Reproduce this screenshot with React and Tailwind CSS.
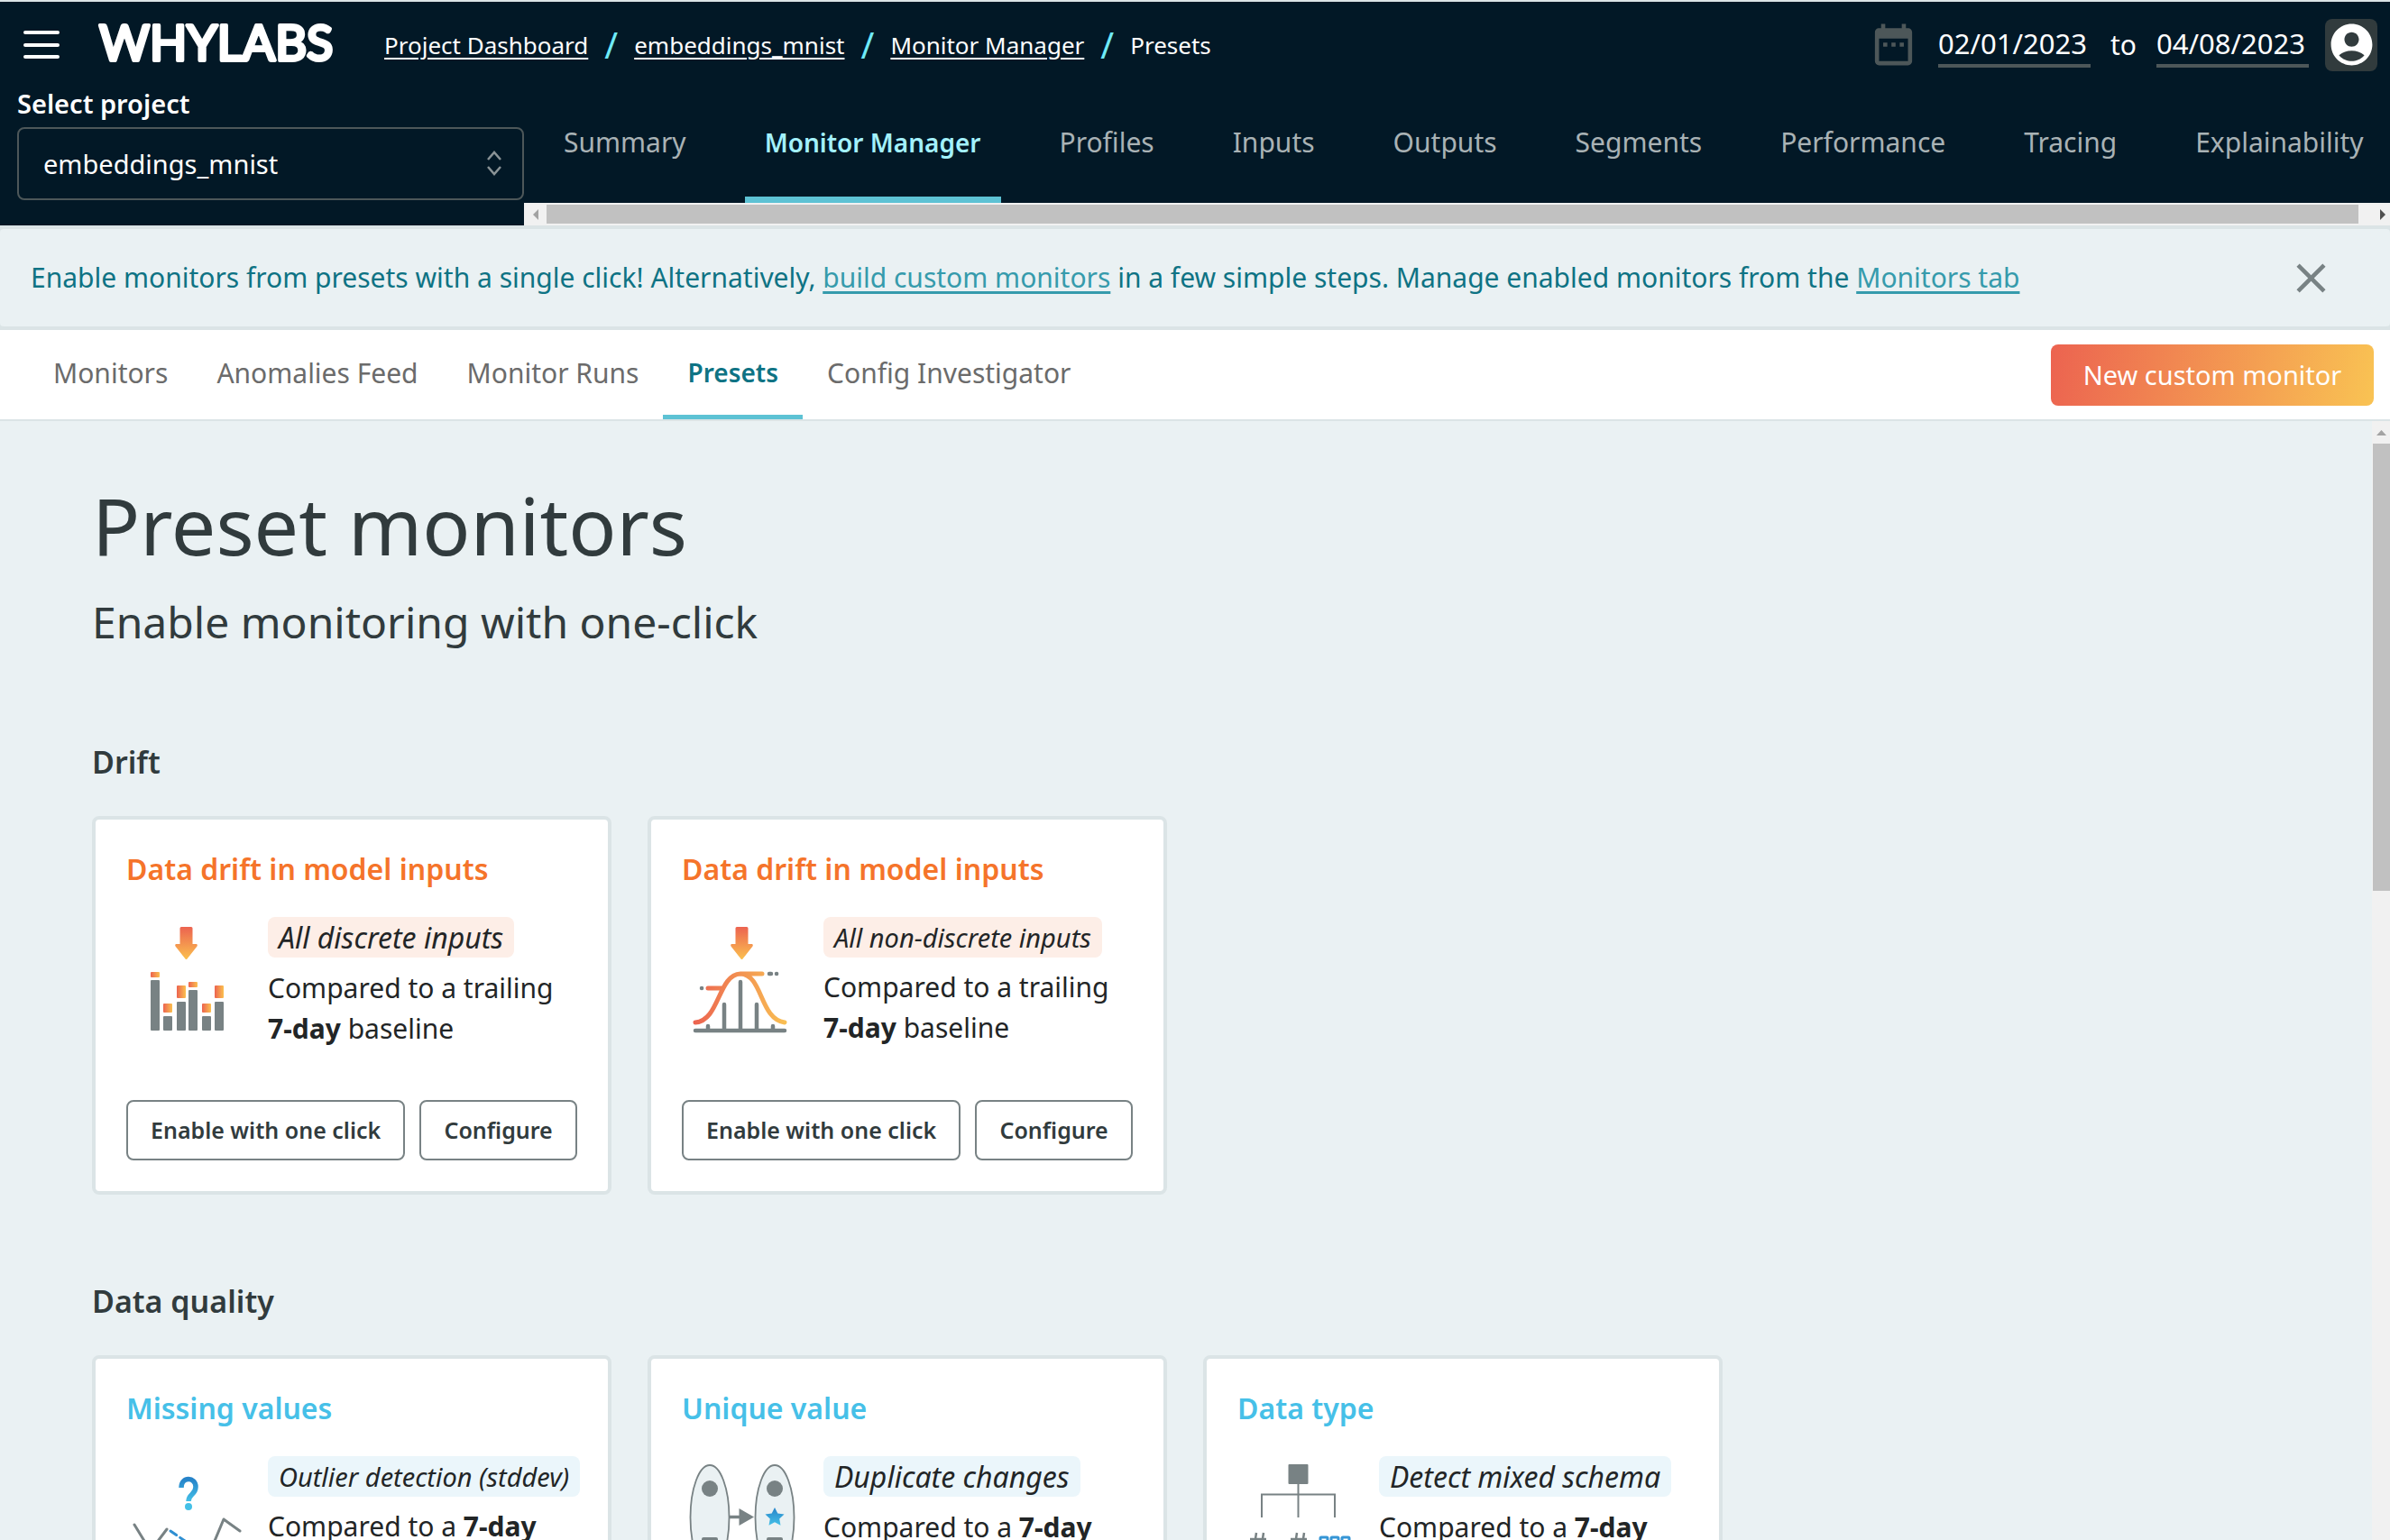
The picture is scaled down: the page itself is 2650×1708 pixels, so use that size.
import React from "react";
import { MdAccountCircle, MdClose, MdDateRange } from "react-icons/md";

const GRAY = "#788284";

function Hamburger() {
  return (
    <svg width="42" height="34" viewBox="0 0 42 34" fill="none" stroke="#fff" strokeWidth="4" strokeLinecap="round">
      <path d="M3 3H39M3 17H39M3 30H39" />
    </svg>
  );
}

function Logo() {
  return (
    <svg width="276" height="60" viewBox="0 0 276 60">
      <text
        x="2"
        y="47"
        fontFamily="Lato, sans-serif"
        fontSize="54"
        fill="#fff"
        stroke="#fff"
        strokeWidth="4"
        strokeLinejoin="round"
      >
        WHYLABS
      </text>
    </svg>
  );
}

function Arrow() {
  return (
    <>
      <defs>
        <linearGradient id="arrowFill" x1="0" y1="0" x2="0" y2="1">
          <stop offset="0" stopColor="#ec6350" />
          <stop offset="1" stopColor="#fbc04f" />
        </linearGradient>
      </defs>
      <path
        d="M61 11H72Q73.500 11 73.500 12.500V30H78Q79.500 30.500 78.500 32.500L67.500 46.500Q66.500 47.500 65.500 46.500L54.500 32.500Q53.500 30.500 55 30H59.500V12.500Q59.500 11 61 11Z"
        fill="url(#arrowFill)"
      />
    </>
  );
}

const BARS = [
  [27, 61, 6, 70],
  [41, 96, 10, 110],
  [56, 76, 14, 94],
  [69, 72, 6, 81],
  [84, 96, 10, 110],
  [98, 76, 14, 94],
];

function DiscreteIcon() {
  return (
    <svg width="157" height="140" viewBox="0 0 157 140" className="shrink-0">
      <Arrow />
      <defs>
        <linearGradient id="barCap">
          <stop offset="0" stopColor="#ec6350" />
          <stop offset="1" stopColor="#fbc04f" />
        </linearGradient>
      </defs>
      {BARS.map(([x, top, h, gray]) => (
        <g key={x}>
          <rect x={x} y={top} width="10" height={h} rx="1" fill="url(#barCap)" />
          <rect x={x} y={gray} width="10" height={126 - gray} rx="1" fill={GRAY} />
        </g>
      ))}
    </svg>
  );
}

function DistributionIcon() {
  return (
    <svg width="157" height="140" viewBox="0 0 157 140" className="shrink-0" fill="none" strokeLinecap="round">
      <Arrow />
      <defs>
        <linearGradient id="curve" gradientUnits="userSpaceOnUse" x1="13" y1="0" x2="116" y2="0">
          <stop offset="0" stopColor="#ec6350" />
          <stop offset="1" stopColor="#f9c053" />
        </linearGradient>
      </defs>
      <path d="M15 126H114M29 121V125M47 97V125M65 72V125M83 97V125M101 121V125" stroke={GRAY} strokeWidth="4.500" />
      <path
        d="M15 117C42 115 40 64 65 63C90 64 86 113 114 117M65 63H89M29 79H45"
        stroke="url(#curve)"
        strokeWidth="5"
      />
      <path d="M97 63H99M105 63H105.100M22 79H22.100" stroke={GRAY} strokeWidth="4.500" />
    </svg>
  );
}

function BlueGradient({ id }) {
  return (
    <defs>
      <linearGradient id={id} x1="0" y1="0" x2="0" y2="1">
        <stop offset="0" stopColor="#2683c9" />
        <stop offset="1" stopColor="#44c0e7" />
      </linearGradient>
    </defs>
  );
}

function MissingIcon() {
  return (
    <svg width="157" height="140" viewBox="0 0 157 140" className="shrink-0" fill="none" strokeLinecap="round" strokeLinejoin="round">
      <BlueGradient id="question" />
      <path d="M61 35C61 22 77 23 77 34C77 43 69 42 69 50" stroke="url(#question)" strokeWidth="5.500" strokeLinecap="butt" />
      <circle cx="69" cy="56" r="4" fill="#44c0e7" />
      <g stroke={GRAY} strokeWidth="3">
        <path d="M9 76L20 94L26 106L36 93L45 81" />
        <path d="M92 112L98 94L108 70L126 83" />
      </g>
      <path d="M49 83L65 94L80 112" stroke="#2f8fd2" strokeWidth="3" strokeDasharray="8 5" />
    </svg>
  );
}

function UniqueIcon() {
  return (
    <svg width="157" height="140" viewBox="0 0 157 140" className="shrink-0">
      <BlueGradient id="star" />
      {[31, 103].map((cx) => (
        <g key={cx}>
          <ellipse cx={cx} cy="68" rx="21.500" ry="58" fill="#eaf1f3" stroke={GRAY} strokeWidth="1.800" />
          <circle cx={cx} cy="36" r="9" fill={GRAY} />
          <rect x={cx - 9} y="90" width="18" height="18" rx="2" fill={GRAY} />
        </g>
      ))}
      <path d="M53 67.500H65" stroke={GRAY} strokeWidth="3.500" />
      <path d="M63.500 58V77L80 67.500Z" fill={GRAY} />
      <path
        d="M103 57L106.300 63.500L113.500 64.500L108.200 69.500L109.500 76.700L103 73.300L96.500 76.700L97.800 69.500L92.500 64.500L99.700 63.500Z"
        fill="url(#star)"
      />
    </svg>
  );
}

function SchemaIcon() {
  return (
    <svg width="157" height="140" viewBox="0 0 157 140" className="shrink-0" fill="none">
      <rect x="56.500" y="9" width="22" height="22" rx="1" fill={GRAY} />
      <path d="M67.500 31V68M27 68V42.500H108V68" stroke={GRAY} strokeWidth="2" />
      {[14, 59].map((x) => (
        <path
          key={x}
          d={`M${x} 92H${x + 18}M${x - 1} 99H${x + 17}M${x + 7} 85L${x + 4} 105M${x + 15} 85L${x + 12} 105`}
          stroke={GRAY}
          strokeWidth="2.500"
        />
      ))}
      {[92, 104, 116].map((x) => (
        <rect key={x} x={x} y="90" width="8" height="14" rx="1" stroke="#3696d6" strokeWidth="3" />
      ))}
    </svg>
  );
}

const OUTLINE_BUTTON =
  "h-[67px] whitespace-nowrap rounded-lg border-2 border-[#788284] text-[25px] font-semibold text-[#313b3d]";

function PresetCard({ title, tone, chip, dense, icon, firstLine, children }) {
  return (
    <article className="flex min-h-[420px] w-[576px] flex-col rounded-lg border-4 border-[#dbe4e6] bg-white p-[34px]">
      <h3
        className={
          tone === "orange"
            ? "mb-8 text-[32px] font-semibold leading-[42px] text-[#f5742a]"
            : "mb-8 text-[32px] font-semibold leading-[42px] text-[#46c0e8]"
        }
      >
        {title}
      </h3>
      <div className="flex">
        {icon}
        <div className="whitespace-nowrap text-[30px] leading-[45px] text-[#222526]">
          <span
            className={`inline-block rounded-lg px-3 italic ${tone === "orange" ? "bg-[#fdeee7]" : "bg-[#ebf6fb]"} ${
              dense ? "text-[29px]" : "text-[32px]"
            }`}
          >
            {chip}
          </span>
          <p className="mt-[10px]">
            {firstLine}
            <br />
            {children}
          </p>
        </div>
      </div>
      <div className="mt-auto flex gap-4">
        <button type="button" className={`${OUTLINE_BUTTON} grow-[311] basis-0`}>Enable with one click</button>
        <button type="button" className={`${OUTLINE_BUTTON} grow-[174] basis-0`}>Configure</button>
      </div>
    </article>
  );
}

const NAV = ["Summary", "Monitor Manager", "Profiles", "Inputs", "Outputs", "Segments", "Performance", "Tracing", "Explainability"];
const TABS = ["Monitors", "Anomalies Feed", "Monitor Runs", "Presets", "Config Investigator"];
const DATE_INPUT =
  "w-[169px] border-b-4 border-[#4d5759] bg-transparent text-[31px] leading-[46px] text-white outline-none";

function Header() {
  return (
    <header className="border-t-2 border-[#dbe4e6] bg-[#021826] text-white">
      <div className="flex h-[95px] items-center pl-[25px] pr-[14px]">
        <button type="button" aria-label="Menu">
          <Hamburger />
        </button>
        <a href="#home" aria-label="WhyLabs home" className="ml-[41px]">
          <Logo />
        </a>
        <nav aria-label="Breadcrumb" className="ml-[42px] flex items-center text-[26px] leading-[36px]">
          {["Project Dashboard", "embeddings_mnist", "Monitor Manager"].map((c) => (
            <React.Fragment key={c}>
              <a href="#crumb" className="underline decoration-2 underline-offset-4">
                {c}
              </a>
              <span className="mx-[18px] text-[40px] leading-[36px] text-[#6feaf8]">/</span>
            </React.Fragment>
          ))}
          <span>Presets</span>
        </nav>
        <div className="ml-auto flex items-center text-[30px]">
          <MdDateRange size={55} color="#4d5759" />
          <input aria-label="Start date" defaultValue="02/01/2023" className={`${DATE_INPUT} ml-[22px]`} />
          <span className="mx-[22px]">to</span>
          <input aria-label="End date" defaultValue="04/08/2023" className={DATE_INPUT} />
          <button
            type="button"
            aria-label="Account"
            className="ml-[18px] flex h-[58px] w-[58px] items-center justify-center rounded-lg bg-[#313b3d]"
          >
            <MdAccountCircle size={55} />
          </button>
        </div>
      </div>
      <div className="flex">
        <div className="w-[581px] shrink-0 pl-[19px]">
          <label htmlFor="project" className="mb-2 block text-[29px] font-semibold leading-[36px]">
            Select project
          </label>
          <div className="relative">
            <select
              id="project"
              className="block h-[81px] w-full appearance-none rounded-lg border-2 border-[#4d5759] bg-transparent pl-[27px] text-[29px] text-white"
            >
              <option>embeddings_mnist</option>
            </select>
            <svg
              className="pointer-events-none absolute right-6 top-6"
              width="18"
              height="30"
              viewBox="0 0 18 30"
              fill="none"
              stroke="#8a9396"
              strokeWidth="2.500"
            >
              <path d="M2 12L9 4L16 12M2 20L9 28L16 20" />
            </svg>
          </div>
        </div>
        <div className="flex min-w-0 flex-1 flex-col">
          <nav aria-label="Project" className="flex h-[128px] gap-[43px] overflow-hidden pl-[22px] text-[30px]">
            {NAV.map((t) => (
              <a
                key={t}
                href="#tab"
                className={
                  t === "Monitor Manager"
                    ? "flex items-center whitespace-nowrap border-b-[7px] border-[#5dc2d4] px-[22px] text-[28px] font-semibold text-[#a3f1fc]"
                    : "flex items-center whitespace-nowrap border-b-[7px] border-transparent px-[22px] text-[#a9b2b5]"
                }
              >
                {t}
              </a>
            ))}
          </nav>
          <div className="flex h-[25px] items-center bg-[#f1f1f1]">
            <span className="flex w-[25px] justify-center">
              <svg width="6" height="12" viewBox="0 0 6 12"><path d="M6 0V12L0 6Z" fill="#a3a3a3" /></svg>
            </span>
            <span className="h-[21px] flex-1 bg-[#c1c1c1]" />
            <span className="flex w-[35px] justify-end pr-[5px]">
              <svg width="6" height="12" viewBox="0 0 6 12"><path d="M0 0V12L6 6Z" fill="#505050" /></svg>
            </span>
          </div>
        </div>
      </div>
    </header>
  );
}

export default function App() {
  return (
    <div className="flex h-screen flex-col overflow-hidden bg-[#eaf1f3] font-['Noto_Sans',sans-serif]">
      <Header />

      <div className="bg-[#dbe4e6] py-1">
        <div className="flex h-[108px] items-center justify-between rounded bg-[#eaf1f3] pl-[34px] pr-[60px] text-[30px] text-[#0e7384]">
          <p className="pb-[2px]">
            Enable monitors from presets with a single click! Alternatively,{" "}
            <a href="#custom" className="text-[#369bac] underline decoration-[3px] underline-offset-4">build custom monitors</a>{" "}
            in a few simple steps. Manage enabled monitors from the{" "}
            <a href="#monitors" className="text-[#369bac] underline decoration-[3px] underline-offset-4">Monitors tab</a>
          </p>
          <button type="button" aria-label="Close">
            <MdClose size={55} color={GRAY} />
          </button>
        </div>
      </div>

      <div className="flex h-[101px] shrink-0 items-center border-b-2 border-[#dbe4e6] bg-white pl-8 pr-[18px]">
        <nav aria-label="Monitor manager" className="flex h-full text-[30px]">
          {TABS.map((t) => (
            <a
              key={t}
              href="#section"
              className={
                t === "Presets"
                  ? "flex items-center border-b-[5px] border-[#5dc2d4] px-[27px] text-[28px] font-semibold text-[#0e7384]"
                  : "flex items-center border-b-[5px] border-transparent px-[27px] text-[#6b6b6b]"
              }
            >
              {t}
            </a>
          ))}
        </nav>
        <button
          type="button"
          className="ml-auto h-[68px] w-[358px] rounded-lg bg-[linear-gradient(100deg,#ec6350,#f9c353)] text-[29px] text-white"
        >
          New custom monitor
        </button>
      </div>

      <div className="flex min-h-0 flex-1">
        <main className="min-w-0 flex-1 overflow-hidden pl-[102px] pt-[65px] text-[#313b3d]">
          <h1 className="text-[88px] leading-[100px]">Preset monitors</h1>
          <p className="mt-[28px] text-[48px] leading-[60px]">Enable monitoring with one-click</p>

          <section className="mt-[103px]">
            <h2 className="mb-[38px] text-[34px] font-semibold leading-[44px]">Drift</h2>
            <div className="flex flex-wrap gap-10">
              <PresetCard title="Data drift in model inputs" tone="orange" chip="All discrete inputs" icon={<DiscreteIcon />} firstLine="Compared to a trailing">
                <b>7-day</b> baseline
              </PresetCard>
              <PresetCard title="Data drift in model inputs" tone="orange" chip="All non-discrete inputs" dense icon={<DistributionIcon />} firstLine="Compared to a trailing">
                <b>7-day</b> baseline
              </PresetCard>
            </div>
          </section>

          <section className="mt-24">
            <h2 className="mb-[38px] text-[34px] font-semibold leading-[44px]">Data quality</h2>
            <div className="flex flex-wrap gap-10">
              <PresetCard title="Missing values" tone="blue" chip="Outlier detection (stddev)" dense icon={<MissingIcon />} firstLine={<>Compared to a <b>7-day</b></>}>
                trailing baseline
              </PresetCard>
              <PresetCard title="Unique value" tone="blue" chip="Duplicate changes" icon={<UniqueIcon />} firstLine={<>Compared to a <b>7-day</b></>}>
                trailing baseline
              </PresetCard>
              <PresetCard title="Data type" tone="blue" chip="Detect mixed schema" icon={<SchemaIcon />} firstLine={<>Compared to a <b>7-day</b></>}>
                trailing baseline
              </PresetCard>
            </div>
          </section>
        </main>
        <div className="flex w-5 shrink-0 flex-col bg-[#f1f1f1] pl-px">
          <span className="flex h-[25px] items-center justify-center">
            <svg width="11" height="6" viewBox="0 0 11 6"><path d="M0 6H11L5.500 0Z" fill="#a3a3a3" /></svg>
          </span>
          <span className="h-[40%] bg-[#c1c1c1]" />
        </div>
      </div>
    </div>
  );
}
